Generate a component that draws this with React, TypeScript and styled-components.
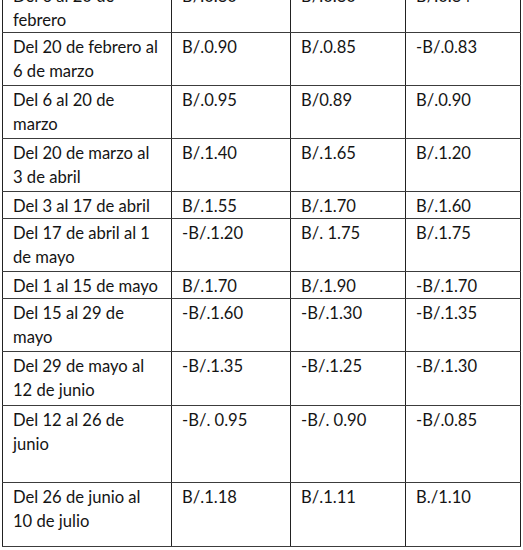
import React from "react";
import styled, { createGlobalStyle } from "styled-components";

const Global = createGlobalStyle`
  html, body { margin: 0; padding: 0; background: #fff; }
  body { overflow: hidden; }
`;

const Page = styled.div`
  width: 523px;
  height: 550px;
  overflow: hidden;
  background: #fff;
`;

const Table = styled.div`
  margin: -17.5px 0 0 2px;
  width: 519px;
  display: flex;
  flex-direction: column;
  font-family: "Lato", "Liberation Sans", sans-serif;
  font-size: 16.6px;
  line-height: 24px;
  color: #141414;
`;

const Row = styled.div<{ $h: number }>`
  display: grid;
  grid-template-columns: 169px 119px 115px 116px;
  height: ${(p) => p.$h}px;
  box-sizing: border-box;
  border-bottom: 1.5px solid #3c3c3c;
`;

const Cell = styled.div<{ $last?: boolean }>`
  box-sizing: border-box;
  border-left: 1.5px solid #222;
  border-right: ${(p) => (p.$last ? "1.5px solid #222" : "none")};
  padding: 1.5px 0 0 10px;
  white-space: nowrap;
  overflow: hidden;
`;

const Line = styled.div`
  display: block;
`;

type RowData = { label: string[]; values: string[]; h: number };

const rows: RowData[] = [
  { label: ["Del 6 al 20 de", "febrero"], values: ["B/.0.80", "B/.0.80", "B/.0.84"], h: 50.5 },
  { label: ["Del 20 de febrero al", "6 de marzo"], values: ["B/.0.90", "B/.0.85", "-B/.0.83"], h: 53 },
  { label: ["Del 6 al 20 de", "marzo"], values: ["B/.0.95", "B/0.89", "B/.0.90"], h: 53 },
  { label: ["Del 20 de marzo al", "3 de abril"], values: ["B/.1.40", "B/.1.65", "B/.1.20"], h: 53 },
  { label: ["Del 3 al 17 de abril"], values: ["B/.1.55", "B/.1.70", "B/.1.60"], h: 27 },
  { label: ["Del 17 de abril al 1", "de mayo"], values: ["-B/.1.20", "B/. 1.75", "B/.1.75"], h: 53 },
  { label: ["Del 1 al 15 de mayo"], values: ["B/.1.70", "B/.1.90", "-B/.1.70"], h: 27 },
  { label: ["Del 15 al 29 de", "mayo"], values: ["-B/.1.60", "-B/.1.30", "-B/.1.35"], h: 53 },
  { label: ["Del 29 de mayo al", "12 de junio"], values: ["-B/.1.35", "-B/.1.25", "-B/.1.30"], h: 54 },
  { label: ["Del 12 al 26 de", "junio"], values: ["-B/. 0.95", "-B/. 0.90", "-B/.0.85"], h: 77 },
  { label: ["Del 26 de junio al", "10 de julio"], values: ["B/.1.18", "B/.1.11", "B./1.10"], h: 64 },
];

export default function App() {
  return (
    <Page>
      <Global />
      <Table>
        {rows.map((r, i) => (
          <Row key={i} $h={r.h}>
            <Cell>
              {r.label.map((l, j) => (
                <Line key={j}>{l}</Line>
              ))}
            </Cell>
            {r.values.map((v, j) => (
              <Cell key={j} $last={j === r.values.length - 1}>
                <Line>{v}</Line>
              </Cell>
            ))}
          </Row>
        ))}
      </Table>
    </Page>
  );
}
